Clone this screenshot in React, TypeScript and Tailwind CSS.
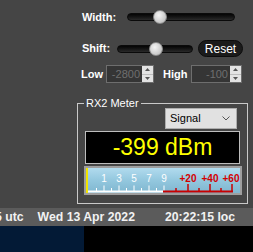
import React from "react";

function Slider({ width, thumbLeft }: { width: number; thumbLeft: number }) {
  return (
    <div
      className="relative h-[8px] rounded-full border border-[#0a0a0a] bg-linear-to-b from-[#050505] to-[#2a2a2a]"
      style={{ width }}
    >
      <div
        className="absolute top-[-4px] h-[14px] w-[14px] rounded-full border border-[#8a8a8a] bg-radial-[at_40%_35%] from-[#f4f4f4] to-[#b4b4b4]"
        style={{ left: thumbLeft }}
      />
    </div>
  );
}

function SpinBox({ value, width }: { value: string; width: number }) {
  return (
    <div
      className="flex h-[18px] items-stretch border border-[#6e6e6e] bg-[#353535]"
      style={{ width }}
    >
      <div className="flex flex-1 items-center justify-end pr-[2px] text-[11px] text-[#6f6f6f]">
        {value}
      </div>
      <div className="flex w-[11px] flex-col bg-[#e3e3e3]">
        <div className="flex flex-1 items-center justify-center border-b border-[#bdbdbd]">
          <svg width="5" height="3" viewBox="0 0 5 3">
            <path d="M0 3 L2.5 0 L5 3 Z" fill="#555" />
          </svg>
        </div>
        <div className="flex flex-1 items-center justify-center">
          <svg width="5" height="3" viewBox="0 0 5 3">
            <path d="M0 0 L2.5 3 L5 0 Z" fill="#555" />
          </svg>
        </div>
      </div>
    </div>
  );
}

function Meter() {
  const whiteNums = [
    { x: 18, t: "1" },
    { x: 33, t: "3" },
    { x: 48, t: "5" },
    { x: 63, t: "7" },
    { x: 78, t: "9" },
  ];
  const redNums = [
    { x: 102, t: "+20" },
    { x: 124, t: "+40" },
    { x: 145, t: "+60" },
  ];
  const whiteTicks = [10.5, 18, 25.5, 33, 40.5, 48, 55.5, 63, 70.5, 78];
  const redTicks = [90, 102, 113, 124, 135, 146];
  return (
    <div className="h-[29px] w-[158px] border-2 border-[#9e9e9e] bg-linear-to-b from-[#b1dbee] via-[#93c7de] to-[#7fb6cf]">
      <svg width="154" height="25" viewBox="0 0 154 25" className="block">
        <rect x="0" y="0" width="2" height="25" fill="#f2e400" />
        {whiteNums.map((n) => (
          <text
            key={n.t}
            x={n.x}
            y="14"
            fontSize="10"
            textAnchor="middle"
            fill="#ffffff"
            fontFamily="Liberation Sans, Arial, sans-serif"
          >
            {n.t}
          </text>
        ))}
        {redNums.map((n) => (
          <text
            key={n.t}
            x={n.x}
            y="14"
            fontSize="10"
            fontWeight="bold"
            textAnchor="middle"
            fill="#d40000"
            fontFamily="Liberation Sans, Arial, sans-serif"
          >
            {n.t}
          </text>
        ))}
        <line x1="2" y1="23.5" x2="77" y2="23.5" stroke="#ffffff" strokeWidth="2" />
        {whiteTicks.map((x, i) => (
          <line
            key={x}
            x1={x}
            y1={i % 2 === 1 ? 17.5 : 20}
            x2={x}
            y2="23"
            stroke="#ffffff"
            strokeWidth="1"
          />
        ))}
        <line x1="77" y1="23.5" x2="147" y2="23.5" stroke="#c80000" strokeWidth="2" />
        {redTicks.map((x, i) => (
          <line
            key={x}
            x1={x}
            y1={i % 2 === 1 ? 16 : 20}
            x2={x}
            y2="23"
            stroke="#c80000"
            strokeWidth="1.5"
          />
        ))}
      </svg>
    </div>
  );
}

export default function App() {
  return (
    <div className="flex h-[252px] w-[253px] flex-col overflow-hidden bg-[#454545] font-['Liberation_Sans',Arial,sans-serif] text-white">
      <div className="flex h-[208px] flex-col">
        {/* Width */}
        <div className="mt-[13px] flex h-[8px] items-center pl-[82px]">
          <span className="w-[45px] text-[11px] font-bold leading-none">Width:</span>
          <Slider width={108} thumbLeft={25} />
        </div>

        {/* Shift + Reset */}
        <div className="mt-[19px] flex h-[17px] items-center pl-[82px]">
          <span className="w-[35px] text-[11px] font-bold leading-none">Shift:</span>
          <Slider width={76} thumbLeft={31} />
          <button className="ml-[5px] h-[17px] w-[45px] rounded-full border border-[#0c0c0c] bg-[#1b1b1b] text-[12px] leading-none text-white">
            Reset
          </button>
        </div>

        {/* Low / High */}
        <div className="mt-[8px] flex h-[18px] items-center pl-[81px]">
          <span className="w-[25px] text-[11px] font-bold leading-none">Low</span>
          <SpinBox value="-2800" width={48} />
          <span className="ml-[9px] w-[28px] text-[11px] font-bold leading-none">High</span>
          <SpinBox value="-100" width={51} />
        </div>

        {/* RX2 Meter group */}
        <div className="relative ml-[77px] mt-[20px] flex h-[101px] w-[171px] flex-col border border-[#c9c9c9]">
          <span className="absolute left-[6px] top-[-8px] bg-[#454545] px-[2px] text-[11px] leading-[14px] text-white">
            RX2 Meter
          </span>
          <div className="mt-[4px] flex justify-end pr-[10px]">
            <div className="flex h-[21px] w-[72px] items-center justify-between border border-[#adadad] bg-[#e1e1e1] pl-[4px] pr-[6px] text-[11px] text-black">
              <span>Signal</span>
              <svg width="8" height="5" viewBox="0 0 8 5">
                <path d="M0.5 0.5 L4 4 L7.5 0.5" fill="none" stroke="#555" strokeWidth="1" />
              </svg>
            </div>
          </div>
          <div className="ml-[7px] mt-[2px] flex h-[33px] w-[155px] items-center justify-center border border-[#bdbdbd] bg-black text-[23px] leading-none text-[#ffff00]">
            -399 dBm
          </div>
          <div className="ml-[6px] mt-[2px]">
            <Meter />
          </div>
        </div>
      </div>

      {/* status bar */}
      <div className="flex h-[18px] items-center whitespace-nowrap bg-[#5b5b5b] text-[12.25px] font-bold leading-none text-[#f2f2f2]">
        <span className="ml-[-5px]">5 utc</span>
        <span className="ml-[14px]">Wed 13 Apr 2022</span>
        <span className="ml-[30px]">20:22:15 loc</span>
      </div>

      <div className="flex h-[26px]">
        <div className="w-[84px] bg-[#031a36]" />
        <div className="flex-1 bg-black" />
      </div>
    </div>
  );
}
